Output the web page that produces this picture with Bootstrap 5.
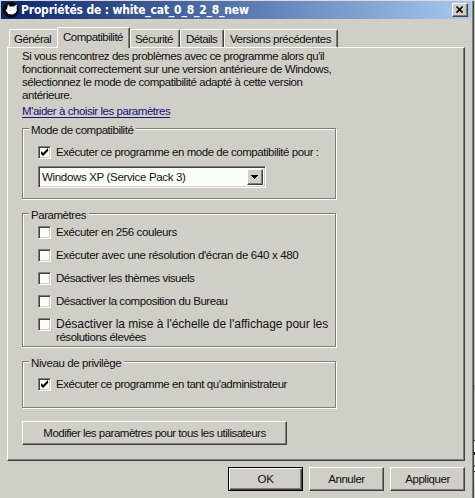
<!DOCTYPE html>
<html lang="fr">
<head>
<meta charset="utf-8">
<title>Propriétés de : white_cat_0_8_2_8_new</title>
<link href="https://cdn.jsdelivr.net/npm/bootstrap@5.3.0/dist/css/bootstrap.min.css" rel="stylesheet">
<style>
:root{--face:#d0cec7;--sh:#7f7e7a;--dk:#434240;--hi:#fcfcf8}
body{width:475px;height:498px;overflow:hidden;background:var(--face);font:11.5px/13px "Liberation Sans",Arial,sans-serif;letter-spacing:-.45px;color:#111;white-space:nowrap}
.dialog{width:474px;height:498px;box-shadow:inset 0 1px #dcdbd6,inset -1px 0 var(--dk),inset -2px 0 var(--sh);padding:1px 3px 0 1px}
.behind{width:1px;height:498px;background:linear-gradient(#c6c5c0 0 385px,#aaa 385px 390px,#c6c5c0 390px 440px,#333 440px 441px,#fff 441px 452px,#111 452px 455px,#ddd 455px 465px,#777 465px 467px,#fff 467px 471px,#222 471px 472px,#ddd 472px 482px,#d8d8d6 482px)}
.titlebar{height:18px;background:linear-gradient(90deg,#0b256b,#a5c9f0);color:#fff;font:bold 12px/18px "DejaVu Sans Condensed","DejaVu Sans",sans-serif;letter-spacing:-.18px;padding:0 3px 0 2px}
.titlebar svg{width:16px;height:16px;margin-right:2px}
.raised{background:var(--face);border:1px solid;border-color:var(--hi) var(--dk) var(--dk) var(--hi);box-shadow:inset -1px -1px var(--sh);border-radius:0;color:#111;padding:0;font:inherit;letter-spacing:inherit;display:flex;align-items:center;justify-content:center}
.close-btn{width:16px;height:14px}
.tabs{height:28px;padding-left:8px}
.tabs .nav-link{height:18px;border:1px solid var(--hi);border-right:1px solid var(--dk);border-bottom:0;border-radius:2px 2px 0 0;box-shadow:inset -1px 0 var(--sh);padding:3px 0 0 4px;color:#111;line-height:13px}
.tabs .nav-link.active{height:21px;background:var(--face);margin-bottom:-1px;padding:3px 0 0 5px;position:relative;z-index:1}
.tabs .first{border-right:0;box-shadow:none}
.tab-general{width:48px;letter-spacing:-.55px}
.tab-compat{width:73px;letter-spacing:-.5px}
.tab-security{width:50px;letter-spacing:-.55px}
.tabs .tab-details{width:44px;padding-left:5px;letter-spacing:-.55px}
.tabs .tab-versions{width:114px;padding-left:5px;letter-spacing:-.48px}
.panel{width:458px;height:414px;margin-left:6px;padding:2px 0 0 14px;background:var(--face);border:1px solid;border-color:var(--hi) var(--dk) var(--dk) var(--hi);box-shadow:inset -1px -1px var(--sh)}
.help-row{margin-top:3px}
.help{color:#161678;text-decoration:underline;text-underline-offset:2px}
.group{width:314px;border:1px solid var(--sh);box-shadow:inset 1px 1px var(--hi),1px 1px var(--hi);padding:0 0 0 15px}
.group-mode{height:71px;margin-top:10px}
.group-settings{height:134px;margin-top:14px}
.group-level{height:47px;margin-top:14px}
.group-title{width:max-content;background:var(--face);margin:-5px 0 0 -9px;padding:0 3px 0 2px;height:13px}
.check{display:flex;height:13px}
.box{width:13px;height:13px;flex:none;background:#fafcf8;border:1px solid;border-color:var(--sh) var(--hi) var(--hi) var(--sh);box-shadow:inset 1px 1px var(--dk),inset -1px -1px var(--face);margin-right:5px}
.box svg{display:block;width:11px;height:11px}
.group-mode .check{margin-top:9px}
.group-level .check{margin-top:8px}
.settings-list{gap:10px;margin-top:4px}
.combo{width:228px;height:22px;margin-top:7px;background:#fafcf8;border:1px solid;border-color:var(--sh) var(--hi) var(--hi) var(--sh);box-shadow:inset 1px 1px var(--dk),inset -1px -1px var(--face);padding:2px 2px 2px 3px}
.combo .raised{width:16px;height:16px}
.all-users{width:265px;height:24px;margin-top:13px}
.actions{gap:6px;margin:6px 0 0 227px}
.actions .raised{width:75px;height:24px}
.actions .default{border:1px solid #000;box-shadow:inset 1px 1px var(--hi),inset -1px -1px var(--dk),inset -2px -2px var(--sh)}
.ls-0{letter-spacing:-.2px}
.ls-1{letter-spacing:-.33px}
.ls-2{letter-spacing:-.4px}
.ls-3{letter-spacing:-.5px}
.ls-wide{font-size:12px;letter-spacing:-.03px}
</style>
</head>
<body class="d-flex">
<main class="dialog">
  <header class="titlebar d-flex align-items-center">
    <svg viewBox="0 0 16 16"><circle cx="8" cy="8" r="8" fill="#05070b"/><path d="M5 2l1.5 2.500h4L14 2.500l-.5 3.500.5 2-1.500 3-3 1.500-4-.5L3.500 9.500 2.500 9 4 7z" fill="#fff"/><path d="M6.500 8l1.500.5M11.500 8l-1 .5" stroke="#ccc"/></svg>
    <span>Propriétés de : white_cat_0_8_2_8_new</span>
    <button class="raised close-btn ms-auto" aria-label="Fermer"><svg class="m-0" viewBox="0 0 16 16"><path d="M4 4l7 7M11 4l-7 7" stroke="#000" stroke-width="1.8"/></svg></button>
  </header>
  <nav class="tabs nav flex-nowrap align-items-end">
    <a class="nav-link first tab-general">Général</a>
    <a class="nav-link active tab-compat">Compatibilité</a>
    <a class="nav-link tab-security">Sécurité</a>
    <a class="nav-link tab-details">Détails</a>
    <a class="nav-link tab-versions">Versions précédentes</a>
  </nav>
  <section class="panel">
    <div>Si vous rencontrez des problèmes avec ce programme alors qu'il<br><span class="ls-2">fonctionnait correctement sur une version antérieure de Windows,</span><br>sélectionnez le mode de compatibilité adapté à cette version<br>antérieure.</div>
    <div class="help-row"><a class="help">M'aider à choisir les paramètres</a></div>
    <div class="group group-mode">
      <div class="group-title">Mode de compatibilité</div>
      <label class="check"><span class="box"><svg viewBox="0 0 11 11"><path d="M2 4v3l2 2 5-5V1L4 6z"/></svg></span>Exécuter ce programme en mode de compatibilité pour :</label>
      <div class="combo d-flex align-items-center"><span class="ls-1">Windows XP (Service Pack 3)</span><span class="raised ms-auto"><svg width="8" height="5"><path d="M0 0h7v1H6v1H5v1H4v1H3V3H2V2H1V1H0z"/></svg></span></div>
    </div>
    <div class="group group-settings">
      <div class="group-title">Paramètres</div>
      <div class="settings-list d-flex flex-column">
        <label class="check ls-2"><span class="box"></span>Exécuter en 256 couleurs</label>
        <label class="check ls-1"><span class="box"></span>Exécuter avec une résolution d'écran de 640 x 480</label>
        <label class="check"><span class="box"></span>Désactiver les thèmes visuels</label>
        <label class="check"><span class="box"></span>Désactiver la composition du Bureau</label>
        <label class="check"><span class="box"></span><span><span class="ls-wide">Désactiver la mise à l'échelle de l'affichage pour les</span><br>résolutions élevées</span></label>
      </div>
    </div>
    <div class="group group-level">
      <div class="group-title ls-2">Niveau de privilège</div>
      <label class="check"><span class="box"><svg viewBox="0 0 11 11"><path d="M2 4v3l2 2 5-5V1L4 6z"/></svg></span>Exécuter ce programme en tant qu'administrateur</label>
    </div>
    <button class="raised all-users ls-3">Modifier les paramètres pour tous les utilisateurs</button>
  </section>
  <footer class="actions d-flex"><button class="raised default ls-0">OK</button><button class="raised">Annuler</button><button class="raised">Appliquer</button></footer>
</main>
<div class="behind"></div>
<script src="https://cdn.jsdelivr.net/npm/bootstrap@5.3.0/dist/js/bootstrap.bundle.min.js"></script>
</body>
</html>
